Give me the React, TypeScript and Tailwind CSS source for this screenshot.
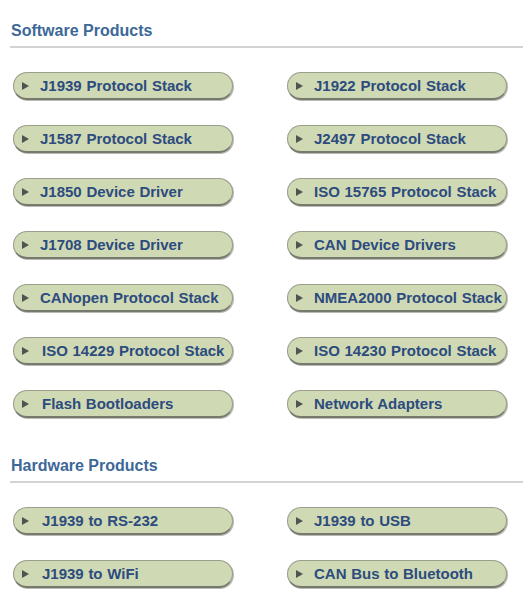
const software = [
  "J1939 Protocol Stack",
  "J1922 Protocol Stack",
  "J1587 Protocol Stack",
  "J2497 Protocol Stack",
  "J1850 Device Driver",
  "ISO 15765 Protocol Stack",
  "J1708 Device Driver",
  "CAN Device Drivers",
  "CANopen Protocol Stack",
  "NMEA2000 Protocol Stack",
  "ISO 14229 Protocol Stack",
  "ISO 14230 Protocol Stack",
  "Flash Bootloaders",
  "Network Adapters",
]

const hardware = ["J1939 to RS-232", "J1939 to USB", "J1939 to WiFi", "CAN Bus to Bluetooth"]

// these labels sit a touch further in on the left column
const indented = ["ISO 14229 Protocol Stack", "Flash Bootloaders", "J1939 to RS-232", "J1939 to WiFi"]

const ProductButton = ({ label }: { label: string }) => (
  <a
    href="#"
    className="flex items-center h-[28px] w-[220px] rounded-[14px] bg-[#cfdab4] border border-[#9a9e8c] border-b-2 border-b-[#76796e] shadow-[1px_1px_0_#b9bbb2] overflow-hidden whitespace-nowrap"
  >
    <svg width="7" height="8" viewBox="0 0 7 8" className="ml-[8px] shrink-0">
      <path d="M0 0 L7 4 L0 8 Z" fill="#4d5552" />
    </svg>
    <span
      className={`${indented.includes(label) ? "ml-[13px]" : "ml-[11px]"} text-[15px] leading-[18px] font-bold text-[#2d4b7e] [word-spacing:0.5px]`}
    >
      {label}
    </span>
  </a>
)

const Section = ({ title, items, top }: { title: string; items: string[]; top: string }) => (
  <div className={top}>
    <h2 className="text-[16px] leading-[18px] font-bold text-[#3d6898] pl-[1px]">{title}</h2>
    <div className="mt-[6px] h-[2px] bg-[#d3d3d3]" />
    <div className="mt-[24px] pl-[3px] grid grid-cols-[220px_220px] gap-x-[54px] gap-y-[25px]">
      {items.map((p) => (
        <ProductButton key={p} label={p} />
      ))}
    </div>
  </div>
)

export default function App() {
  return (
    <div className="bg-white min-h-[599px] pl-[10px] pt-[22px] font-['Liberation_Sans',Arial,sans-serif]">
      <Section title="Software Products" items={software} top="" />
      <Section title="Hardware Products" items={hardware} top="mt-[39px]" />
    </div>
  )
}
